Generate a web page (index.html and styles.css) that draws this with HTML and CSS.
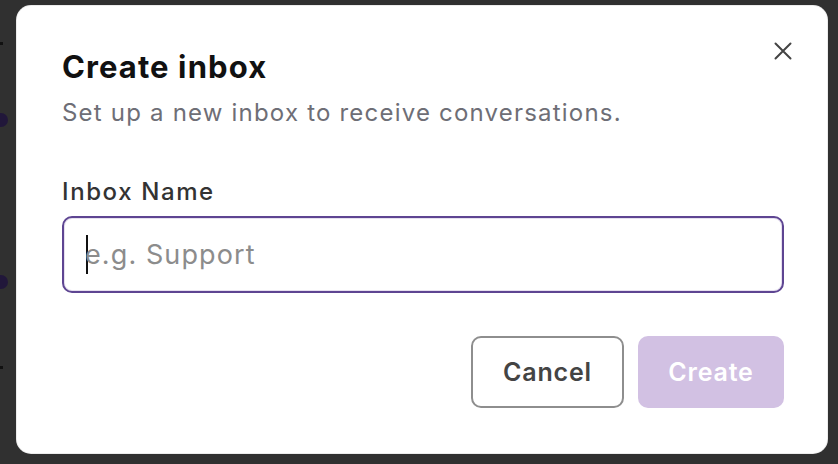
FILE: index.html
```html
<!DOCTYPE html>
<html>
<head>
<meta charset="utf-8">
<link rel="stylesheet" href="styles.css">
</head>
<body>
<div class="backdrop">
  <span class="bg-dot dot-a"></span>
  <span class="bg-dot dot-b"></span>
  <span class="bg-mark mark-a"></span>
  <span class="bg-mark mark-b"></span>
  <div class="modal">
    <button class="close" aria-label="Close">
      <svg width="18" height="18" viewBox="0 0 18 18"><path d="M1.5 1.5L16.5 16.5M16.5 1.5L1.5 16.5" stroke="#444" stroke-width="2" stroke-linecap="round"/></svg>
    </button>
    <h1 class="title">Create inbox</h1>
    <p class="subtitle">Set up a new inbox to receive conversations.</p>
    <label class="label">Inbox Name</label>
    <div class="input">
      <span class="caret"></span><span class="placeholder">e.g. Support</span>
    </div>
    <div class="actions">
      <button class="btn btn-cancel">Cancel</button>
      <button class="btn btn-create">Create</button>
    </div>
  </div>
</div>
</body>
</html>
```
FILE: styles.css
```css
* { box-sizing: border-box; }
html, body { margin: 0; padding: 0; }
body {
  width: 838px;
  height: 464px;
  background: #303030;
  font-family: "Inter", "DejaVu Sans", sans-serif;
  overflow: hidden;
}
.backdrop {
  position: relative;
  width: 838px;
  height: 464px;
  padding: 6px 11px 0 17px;
}
.bg-dot {
  position: absolute;
  left: -6px;
  width: 14px;
  height: 14px;
  border-radius: 50%;
  background: #21173a;
}
.dot-a { top: 113px; }
.dot-b { top: 275px; }
.bg-mark {
  position: absolute;
  left: 0;
  width: 3px;
  height: 3px;
  background: #111;
}
.mark-a { top: 42px; }
.mark-b { top: 366px; }
.modal {
  position: relative;
  width: 810px;
  height: 447px;
  background: #fff;
  border-radius: 14px;
  box-shadow: 0 0 0 1px #ececec;
  padding: 41px 43px 0 45px;
  display: flex;
  flex-direction: column;
}
.close {
  position: absolute;
  top: 36px;
  right: 35px;
  border: 0;
  background: none;
  padding: 0;
  width: 18px;
  height: 18px;
  display: flex;
}
.title {
  margin: 0;
  font-size: 31px;
  font-weight: 700;
  color: #111;
  line-height: 40px;
  letter-spacing: 1.1px;
}
.subtitle {
  margin: 11px 0 0;
  font-size: 24px;
  font-weight: 400;
  color: #6e6e76;
  line-height: 30px;
  letter-spacing: 1.2px;
}
.label {
  margin-top: 49px;
  font-size: 24px;
  font-weight: 500;
  color: #333;
  line-height: 30px;
  letter-spacing: 1.6px;
}
.input {
  margin-top: 9px;
  height: 77px;
  border: 2px solid #5e4592;
  border-radius: 10px;
  box-shadow: inset 0 0 0 1px #e6e0ef;
  display: flex;
  align-items: center;
  padding-left: 22px;
}
.caret {
  width: 2px;
  height: 39px;
  background: #111;
  margin-right: -3px;
}
.placeholder {
  font-size: 27px;
  color: #8c8c8c;
  letter-spacing: 1.1px;
}
.actions {
  margin-top: 43px;
  display: flex;
  justify-content: flex-end;
  gap: 14px;
}
.btn {
  height: 72px;
  border-radius: 10px;
  font-family: inherit;
  font-size: 25px;
  font-weight: 600;
  letter-spacing: 0.8px;
}
.btn-cancel {
  width: 153px;
  background: #fff;
  border: 2px solid #8e8e8e;
  color: #444;
}
.btn-create {
  width: 146px;
  background: #d2c1e3;
  border: 0;
  color: #fff;
}
```
